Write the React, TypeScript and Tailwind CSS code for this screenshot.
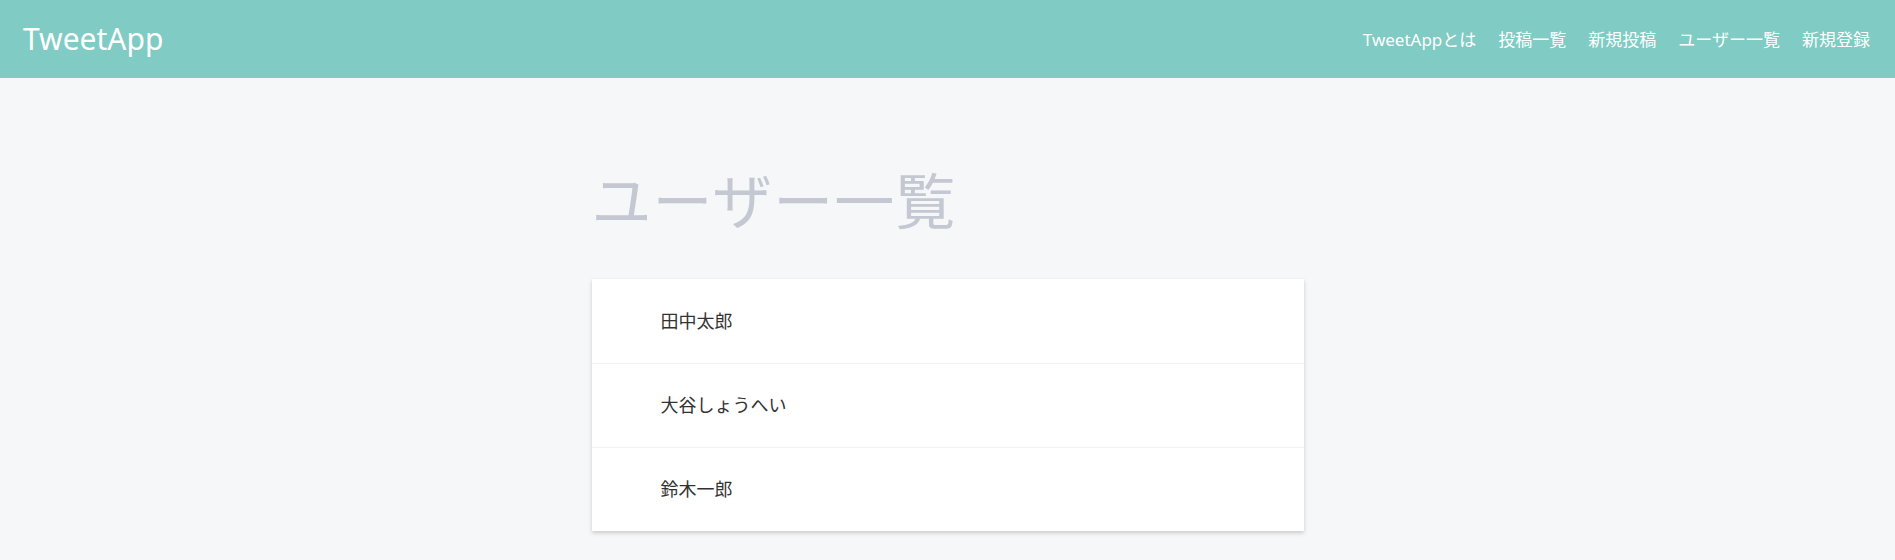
const users = ["田中太郎", "大谷しょうへい", "鈴木一郎"];
const navItems = ["TweetAppとは", "投稿一覧", "新規投稿", "ユーザー一覧", "新規登録"];

const jp = "font-['Noto_Sans','Noto_Sans_CJK_JP',sans-serif]";

export default function App() {
  return (
    <div className={`min-h-[560px] bg-[#f6f7f9] ${jp}`}>
      <header className="flex h-[78px] items-center justify-between bg-[#80cbc4] pl-[23px] pr-[25px]">
        <h1 className="text-[30px] font-normal leading-none text-white">TweetApp</h1>
        <nav className="flex items-center gap-[22px] text-[17px] text-white">
          {navItems.map((item) => (
            <a key={item} href="#" className="leading-none">
              {item}
            </a>
          ))}
        </nav>
      </header>

      <main className="mx-auto w-[712px] pt-[93px]">
        <h2 className="text-[60px] font-normal leading-none tracking-[1px] text-[#c4c8d2]">
          ユーザー一覧
        </h2>
        <div className="mt-[48px] bg-white shadow-[0_2px_4px_rgba(0,0,0,0.18)]">
          {users.map((name, i) => (
            <div
              key={name}
              className={`flex h-[84px] items-center pl-[69px] text-[18px] text-[#333] ${
                i > 0 ? "border-t border-[#f2f2f2]" : ""
              }`}
            >
              {name}
            </div>
          ))}
        </div>
      </main>
    </div>
  );
}
